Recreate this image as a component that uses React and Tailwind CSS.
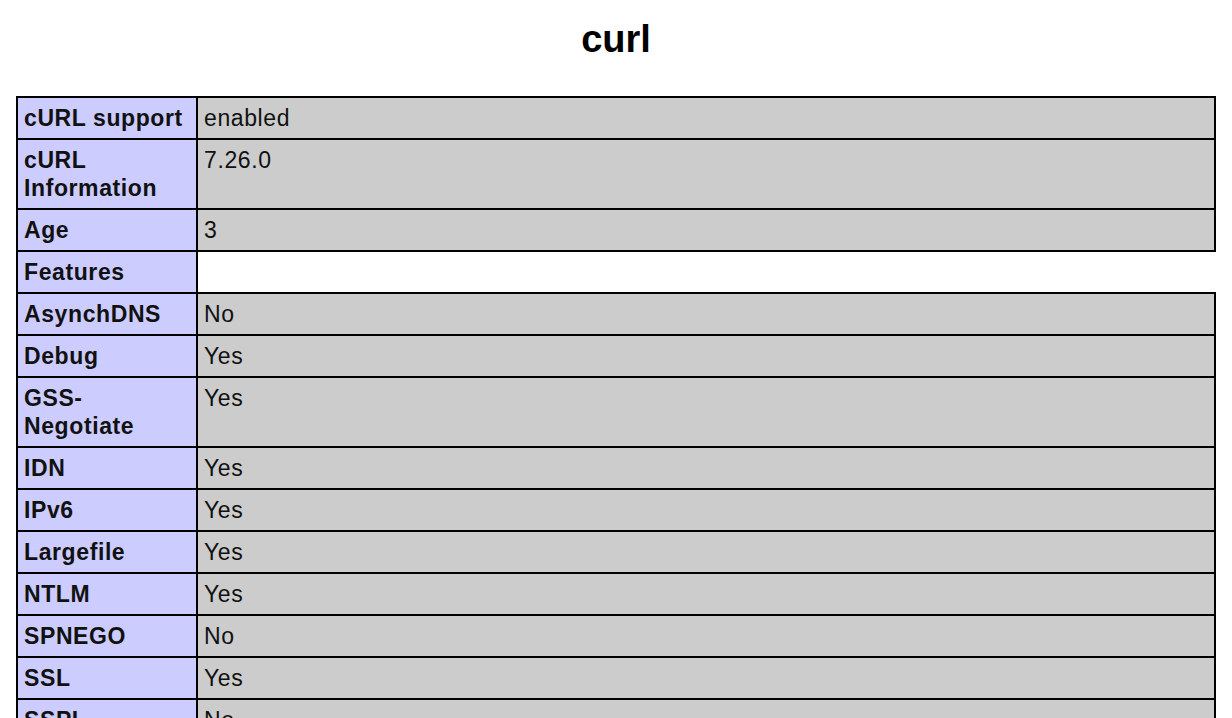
import React from 'react';

// phpinfo() style "curl" module block
const info = [
  { key: 'cURL support', value: 'enabled' },
  { key: 'cURL Information', value: '7.26.0' },
  { key: 'Age', value: '3' },
];

const features = [
  { key: 'AsynchDNS', value: 'No' },
  { key: 'Debug', value: 'Yes' },
  { key: 'GSS-Negotiate', value: 'Yes' },
  { key: 'IDN', value: 'Yes' },
  { key: 'IPv6', value: 'Yes' },
  { key: 'Largefile', value: 'Yes' },
  { key: 'NTLM', value: 'Yes' },
  { key: 'SPNEGO', value: 'No' },
  { key: 'SSL', value: 'Yes' },
  { key: 'SSPI', value: 'No' },
];

function Row({ item }) {
  return (
    <div className="flex">
      <div className="w-[182px] shrink-0 border-l-2 border-r-2 border-b-2 border-black bg-[#ccccff] px-[6px] py-[6px] font-bold">
        {item.key}
      </div>
      <div className="flex-1 border-r-2 border-b-2 border-black bg-[#cccccc] px-[6px] py-[6px]">
        {item.value}
      </div>
    </div>
  );
}

export default function App() {
  return (
    <div className="min-h-screen bg-white text-[#111] font-['Liberation_Sans',Arial,Helvetica,sans-serif] text-[23px] leading-[28px] tracking-[0.6px]">
      {/* Title */}
      <div className="h-[96px] pt-[17px] text-center tracking-normal">
        <h1 className="text-[38px] leading-[44px] font-bold text-black">curl</h1>
      </div>

      <div className="ml-4 w-[1200px]">
        {/* Main table */}
        <div className="border-t-2 border-black">
          {info.map(item => (
            <Row key={item.key} item={item} />
          ))}
        </div>

        {/* Features header row — single cell */}
        <div className="flex">
          <div className="w-[182px] shrink-0 border-l-2 border-r-2 border-black bg-[#ccccff] px-[6px] py-[6px] font-bold">
            Features
          </div>
        </div>

        {/* Features table */}
        <div className="border-t-2 border-black">
          {features.map(item => (
            <Row key={item.key} item={item} />
          ))}
        </div>
      </div>
    </div>
  );
}
